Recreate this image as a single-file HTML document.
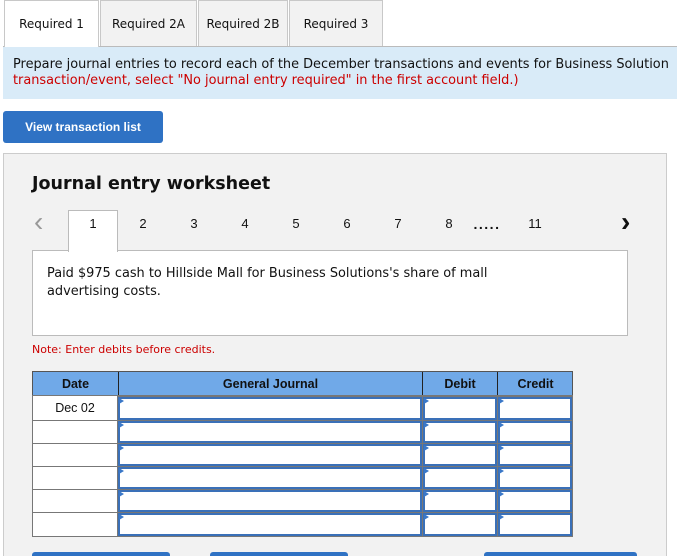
<!DOCTYPE html>
<html style="width:677px;height:556px;overflow:hidden"><head><meta charset="utf-8"><style>
*{margin:0;padding:0;box-sizing:border-box}
body{width:677px;height:556px;overflow:hidden;background:#fff;position:relative;font-family:"DejaVu Sans","Liberation Sans",sans-serif;color:#111}
.a{position:absolute}
.tab{position:absolute;top:0;height:46px;border:1px solid #c8c8c8;border-bottom:none;background:#f2f2f2;font-size:12px;line-height:46px;text-align:center}
.ar{font-family:"Liberation Sans",Arial,sans-serif}
.n{position:absolute;top:216px;font-size:13px;font-family:"Liberation Sans",Arial,sans-serif;width:20px;text-align:center}
.inp{position:absolute;border:2px solid #3a70b8;background:#fff}
.inp:before{content:"";position:absolute;left:-1px;top:-1px;border-left:5px solid #3a78c8;border-top:3px solid transparent;border-bottom:3px solid transparent}
.btn{position:absolute;background:#2f72c4;border-radius:3px}
</style></head><body>
<div class="tab" style="left:4px;width:95px;background:#fff;z-index:2;height:47px">Required 1</div>
<div class="tab" style="left:100px;width:97px">Required 2A</div>
<div class="tab" style="left:198px;width:90px">Required 2B</div>
<div class="tab" style="left:289px;width:94px">Required 3</div>
<div class="a" style="left:3px;top:46px;width:674px;height:1px;background:#bbb"></div>
<div class="a" style="left:3px;top:47px;width:674px;height:52px;background:#d9ebf8;font-size:12.9px;line-height:16px;padding:10px 0 0 10px;white-space:nowrap;overflow:hidden">Prepare journal entries to record each of the December transactions and events for Business Solution<br><span style="color:#c00">transaction/event, select "No journal entry required" in the first account field.)</span></div>
<div class="btn ar" style="left:3px;top:111px;width:160px;height:32px;color:#fff;font-weight:bold;font-size:12px;line-height:32px;text-align:center">View transaction list</div>
<div class="a" style="left:3px;top:153px;width:664px;height:420px;background:#f2f2f2;border:1px solid #ccc"></div>
<div class="a" style="left:32px;top:174px;font-size:17.5px;font-weight:bold">Journal entry worksheet</div>
<div class="a ar" style="left:34px;top:206px;font-size:28px;color:#999">&#8249;</div>
<div class="a ar" style="left:621px;top:206px;font-size:28px;font-weight:bold">&#8250;</div>
<div class="a" style="left:68px;top:210px;width:50px;height:42px;background:#fff;border:1px solid #bbb;border-bottom:none;z-index:2"></div>
<div class="n" style="left:83px;z-index:3">1</div>
<div class="n" style="left:133px">2</div><div class="n" style="left:184px">3</div><div class="n" style="left:235px">4</div><div class="n" style="left:286px">5</div><div class="n" style="left:337px">6</div><div class="n" style="left:388px">7</div><div class="n" style="left:439px">8</div>
<div class="n" style="left:466px;width:42px;font-weight:bold;letter-spacing:1.5px;font-size:14px">.....</div>
<div class="n" style="left:525px">11</div>
<div class="a" style="left:32px;top:250px;width:596px;height:86px;background:#fff;border:1px solid #bbb;font-size:12.9px;line-height:18px;padding:14px 0 0 14px">Paid $975 cash to Hillside Mall for Business Solutions's share of mall<br>advertising costs.</div>
<div class="a" style="left:32px;top:343px;font-size:11px;color:#c00">Note: Enter debits before credits.</div>
<div class="a ar" style="left:32px;top:371px;width:541px;height:25px;background:#70a9e8;border:1px solid #555;font-size:12.5px;font-weight:bold;line-height:24px">
<span class="a" style="left:0;width:85px;text-align:center">Date</span>
<span class="a" style="left:85px;width:304px;text-align:center;border-left:1px solid #222;height:23px">General Journal</span>
<span class="a" style="left:389px;width:75px;text-align:center;border-left:1px solid #222;height:23px">Debit</span>
<span class="a" style="left:464px;width:76px;text-align:center;border-left:1px solid #222;height:23px">Credit</span>
</div>
<div class="a" style="left:32px;top:395px;width:541px;height:142px;background:#777"></div>
<div class="btn" style="left:32px;top:552px;width:138px;height:10px"></div>
<div class="btn" style="left:210px;top:552px;width:138px;height:10px"></div>
<div class="btn" style="left:484px;top:552px;width:153px;height:10px"></div>
<div class="a ar" style="left:33px;top:396px;width:84px;height:24px;background:#fff;font-size:12.5px;line-height:25px;text-align:center">Dec 02</div>
<div class="a" style="left:33px;top:421px;width:84px;height:22px;background:#fff"></div>
<div class="a" style="left:33px;top:444px;width:84px;height:22px;background:#fff"></div>
<div class="a" style="left:33px;top:467px;width:84px;height:22px;background:#fff"></div>
<div class="a" style="left:33px;top:490px;width:84px;height:22px;background:#fff"></div>
<div class="a" style="left:33px;top:513px;width:84px;height:23px;background:#fff"></div>
<div class="inp" style="left:118px;top:397px;width:304px;height:23px"></div><div class="inp" style="left:423px;top:397px;width:74px;height:23px"></div><div class="inp" style="left:498px;top:397px;width:74px;height:23px"></div>
<div class="inp" style="left:118px;top:421px;width:304px;height:22px"></div><div class="inp" style="left:423px;top:421px;width:74px;height:22px"></div><div class="inp" style="left:498px;top:421px;width:74px;height:22px"></div>
<div class="inp" style="left:118px;top:444px;width:304px;height:22px"></div><div class="inp" style="left:423px;top:444px;width:74px;height:22px"></div><div class="inp" style="left:498px;top:444px;width:74px;height:22px"></div>
<div class="inp" style="left:118px;top:467px;width:304px;height:22px"></div><div class="inp" style="left:423px;top:467px;width:74px;height:22px"></div><div class="inp" style="left:498px;top:467px;width:74px;height:22px"></div>
<div class="inp" style="left:118px;top:490px;width:304px;height:22px"></div><div class="inp" style="left:423px;top:490px;width:74px;height:22px"></div><div class="inp" style="left:498px;top:490px;width:74px;height:22px"></div>
<div class="inp" style="left:118px;top:513px;width:304px;height:23px"></div><div class="inp" style="left:423px;top:513px;width:74px;height:23px"></div><div class="inp" style="left:498px;top:513px;width:74px;height:23px"></div>
</body></html>
